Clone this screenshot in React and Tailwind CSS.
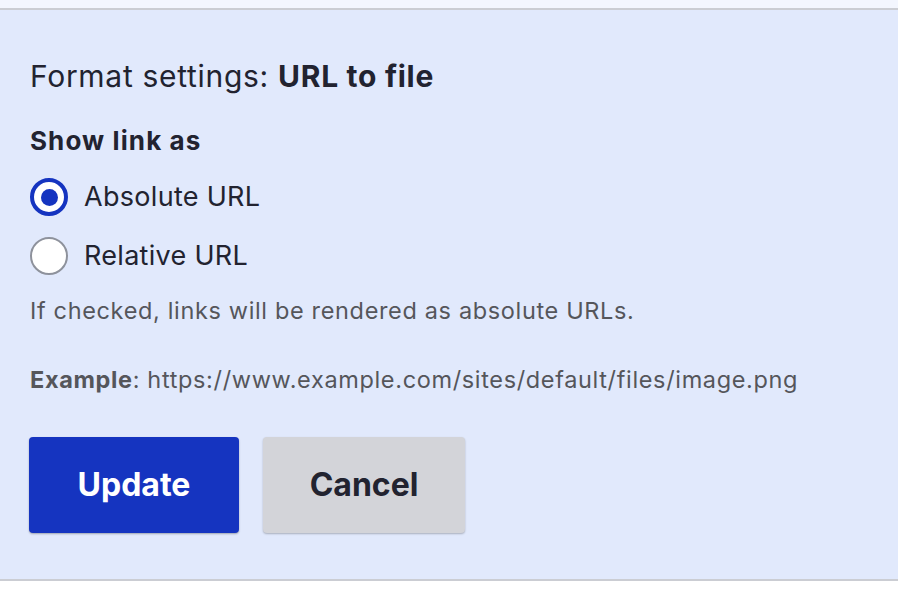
const Radio = ({ checked, label }) => (
  <label className="flex items-center h-[38px]">
    {checked ? (
      <span className="flex items-center justify-center w-[38px] h-[38px] rounded-full border-[4px] border-[#1534c0] bg-white">
        <span className="w-[17px] h-[17px] rounded-full bg-[#1534c0]" />
      </span>
    ) : (
      <span className="w-[38px] h-[38px] rounded-full border-2 border-[#8e929c] bg-white" />
    )}
    <span className="ml-[16px] text-[27px] leading-[38px] tracking-[0.3px] text-[#222330]">{label}</span>
  </label>
)

const App = () => {
  return (
    <div className="min-h-screen bg-white font-['Inter',sans-serif]">
      <div className="h-[8px] bg-[#f3f6fe]" />
      <div className="bg-[#e1e9fc] border-y-2 border-[#cbcdd3] px-[30px] pt-[48px] pb-[46px]">
        <h2 className="text-[30px] leading-[36px] tracking-[0.7px] text-[#222330]">
          Format settings: <span className="font-bold">URL to file</span>
        </h2>
        <div className="mt-[32px] text-[26px] leading-[30px] tracking-[1.1px] font-bold text-[#222330]">Show link as</div>
        <div className="mt-[22px] flex flex-col gap-[21px]">
          <Radio checked label="Absolute URL" />
          <Radio label="Relative URL" />
        </div>
        <p className="mt-[21px] text-[23.5px] leading-[30px] tracking-[0.65px] text-[#55565b]">
          If checked, links will be rendered as absolute URLs.
        </p>
        <p className="mt-[39px] text-[23.5px] leading-[30px] tracking-[0.65px] text-[#55565b]">
          <span className="font-bold">Example</span>: https://www.example.com/sites/default/files/image.png
        </p>
        <div className="mt-[42px] -ml-[1px] flex gap-[24px]">
          <button className="h-[96px] w-[210px] rounded-[4px] bg-[#1534c0] text-white text-[32px] font-bold shadow-[0_1px_2px_rgba(0,0,0,0.3)]">
            Update
          </button>
          <button className="h-[96px] w-[202px] rounded-[4px] bg-[#d3d4d9] text-[#222330] text-[32px] font-bold shadow-[0_1px_2px_rgba(0,0,0,0.25)]">
            Cancel
          </button>
        </div>
      </div>
    </div>
  )
}

export default App;
